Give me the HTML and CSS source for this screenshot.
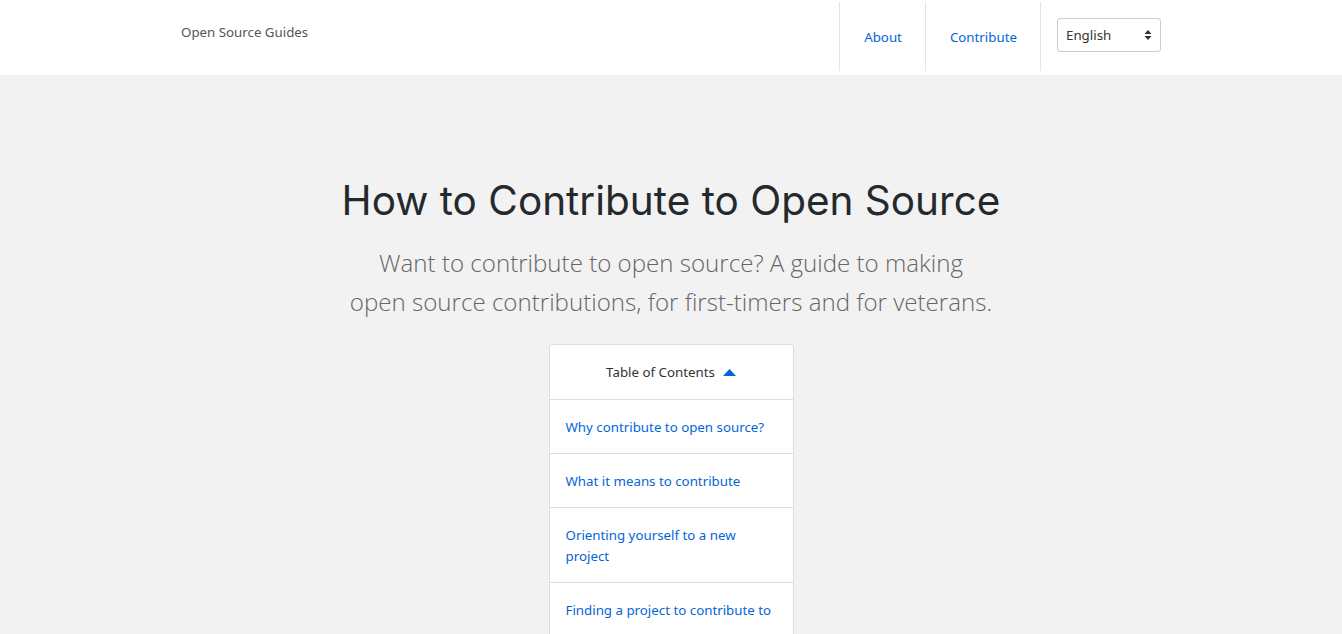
FILE: index.html
```html
<!DOCTYPE html>
<html lang="en">
<head>
<meta charset="utf-8">
<title>How to Contribute to Open Source</title>
<link rel="stylesheet" href="styles.css">
</head>
<body>
<header class="site-header">
  <div class="container header-inner">
    <a class="logo" href="#">Open Source Guides</a>
    <nav class="nav">
      <a class="nav-link" href="#">About</a>
      <a class="nav-link" href="#">Contribute</a>
      <div class="nav-select">
        <div class="select">
          <select class="select-input">
            <option>English</option>
          </select>
          <svg class="select-arrows" width="8" height="12" viewBox="0 0 8 12"><path d="M4 1 L7.5 5 H0.5 Z M4 11 L7.5 7 H0.5 Z" fill="#333"/></svg>
        </div>
      </div>
    </nav>
  </div>
</header>
<main class="hero">
  <h1 class="title">How to Contribute to Open Source</h1>
  <p class="lead">Want to contribute to open source? A guide to making<br>open source contributions, for first-timers and for veterans.</p>
  <div class="toc">
    <div class="toc-head">Table of Contents <svg class="toc-caret" width="13" height="7" viewBox="0 0 13 7"><path d="M6.5 0 L13 7 H0 Z" fill="#0366d6"/></svg></div>
    <a class="toc-item" href="#">Why contribute to open source?</a>
    <a class="toc-item" href="#">What it means to contribute</a>
    <a class="toc-item" href="#">Orienting yourself to a new project</a>
    <a class="toc-item" href="#">Finding a project to contribute to</a>
  </div>
</main>
</body>
</html>
```
FILE: styles.css
```css
* { box-sizing: border-box; }
html, body { margin: 0; padding: 0; }
body {
  font-family: "Noto Sans", "Open Sans", sans-serif;
  font-size: 13.3px;
  color: #333;
  background: #f2f2f2;
}
a { text-decoration: none; }
.container { width: 980px; margin: 0 auto; }
.site-header { background: #fff; height: 75px; }
.header-inner { display: flex; justify-content: space-between; align-items: flex-start; height: 75px; }
.logo { color: #555; margin-top: 22px; line-height: 20px; }
.nav { display: flex; align-items: stretch; height: 69px; margin-top: 2px; }
.nav-link {
  display: flex; align-items: center;
  color: #0366d6;
  padding: 1px 23px 0 24px;
  border-left: 1px solid #e5e5e5;
}
.nav-select { border-left: 1px solid #e5e5e5; padding: 16px 0 0 16px; }
.select { position: relative; width: 104px; height: 34px; }
.select-input {
  -webkit-appearance: none; appearance: none;
  width: 100%; height: 100%;
  border: 1px solid #ccc; border-radius: 3px;
  background: #fff;
  font-family: inherit; font-size: 13.3px; color: #333;
  padding: 0 8px;
}
.select-arrows { position: absolute; right: 9px; top: 11px; pointer-events: none; }
.hero { display: flex; flex-direction: column; align-items: center; padding-top: 98px; }
.title {
  font-family: Inter, sans-serif;
  font-weight: 400;
  font-size: 40.5px;
  line-height: 56px;
  color: #24292e;
  margin: 0;
}
.lead {
  font-family: "Open Sans", sans-serif;
  font-weight: 300;
  font-size: 24.1px;
  line-height: 39px;
  color: #666;
  text-align: center;
  margin: 14px 0 23px;
}
.toc { width: 245px; background: #fff; border: 1px solid #ddd; border-radius: 3px; display: flex; flex-direction: column; }
.toc-head { text-align: center; padding: 17px 0; line-height: 20px; border-bottom: 1px solid #ddd; color: #333; display: flex; justify-content: center; align-items: center; gap: 8px; }
.toc-item { color: #0366d6; padding: 17px 16px 15px; line-height: 21px; border-bottom: 1px solid #ddd; }
```
